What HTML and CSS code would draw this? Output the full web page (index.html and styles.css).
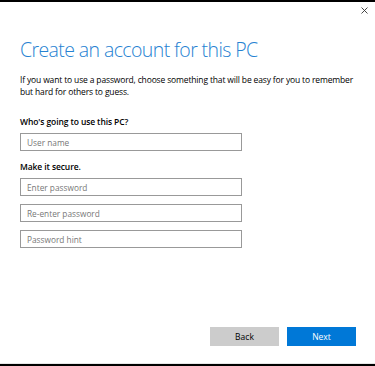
FILE: index.html
```html
<!DOCTYPE html>
<html lang="en">
<head>
    <meta charset="UTF-8">
    <meta name="viewport" content="width=device-width, initial-scale=1.0">
    <title>Create an account for this PC</title>
    <link rel="stylesheet" href="styles.css">
</head>
<body>
    <div class="window">
        <div class="titlebar">
            <svg class="close" width="7" height="7" viewBox="0 0 7 7">
                <path d="M0.5 0.5 L6.5 6.5 M6.5 0.5 L0.5 6.5" stroke="#333" stroke-width="0.9" fill="none"/>
            </svg>
        </div>

        <div class="content">
            <h1>Create an account for this PC</h1>
            <p class="intro">If you want to use a password, choose something that will be easy for you to remember but hard for others to guess.</p>

            <div class="label first">Who's going to use this PC?</div>
            <input class="field" type="text" placeholder="User name">

            <div class="label">Make it secure.</div>
            <input class="field" type="password" placeholder="Enter password">
            <input class="field" type="password" placeholder="Re-enter password">
            <input class="field" type="text" placeholder="Password hint">
        </div>

        <div class="footer">
            <button class="button back">Back</button>
            <button class="button next">Next</button>
        </div>
    </div>
</body>
</html>
```

FILE: styles.css
```css
html, body {
    margin: 0;
    padding: 0;
    background: #fff;
}
body {
    font-family: 'Open Sans', 'Noto Sans', sans-serif;
    color: #000;
}
.window {
    box-sizing: border-box;
    width: 375px;
    height: 366px;
    border-top: 2px solid #000;
    border-bottom: 2px solid #000;
    display: flex;
    flex-direction: column;
}
.titlebar {
    height: 16px;
    display: flex;
    justify-content: flex-end;
    align-items: center;
    padding-right: 7px;
}
.content {
    flex: 1;
    padding: 0 20px;
}
h1 {
    margin: 18px 0 0;
    font-size: 19.5px;
    font-weight: 300;
    color: #2682d2;
    line-height: 28px;
    letter-spacing: -0.6px;
}
.intro {
    margin: 10px 0 0;
    font-size: 8.5px;
    line-height: 12px;
    letter-spacing: -0.15px;
    width: 340px;
}
.label {
    font-size: 8.5px;
    font-weight: 600;
    line-height: 12px;
    letter-spacing: -0.1px;
    margin: 10px 0 5px;
}
.label.first {
    margin-top: 18px;
}
.field {
    display: block;
    box-sizing: border-box;
    width: 222px;
    height: 18px;
    margin: 0 0 8px;
    padding: 0 6px;
    border: 1px solid #999;
    font-family: inherit;
    font-size: 8.3px;
    outline: none;
}
.field::placeholder {
    color: #777;
}
.footer {
    display: flex;
    justify-content: flex-end;
    gap: 8px;
    padding: 0 19px 17px 0;
    border-bottom: 1px solid #e6e6e6;
}
.button {
    width: 69px;
    height: 19px;
    border: none;
    font-family: inherit;
    font-size: 8.5px;
    padding: 0;
}
.back {
    background: #cccccc;
    color: #000;
}
.next {
    background: #0078d7;
    color: #fff;
}
```
